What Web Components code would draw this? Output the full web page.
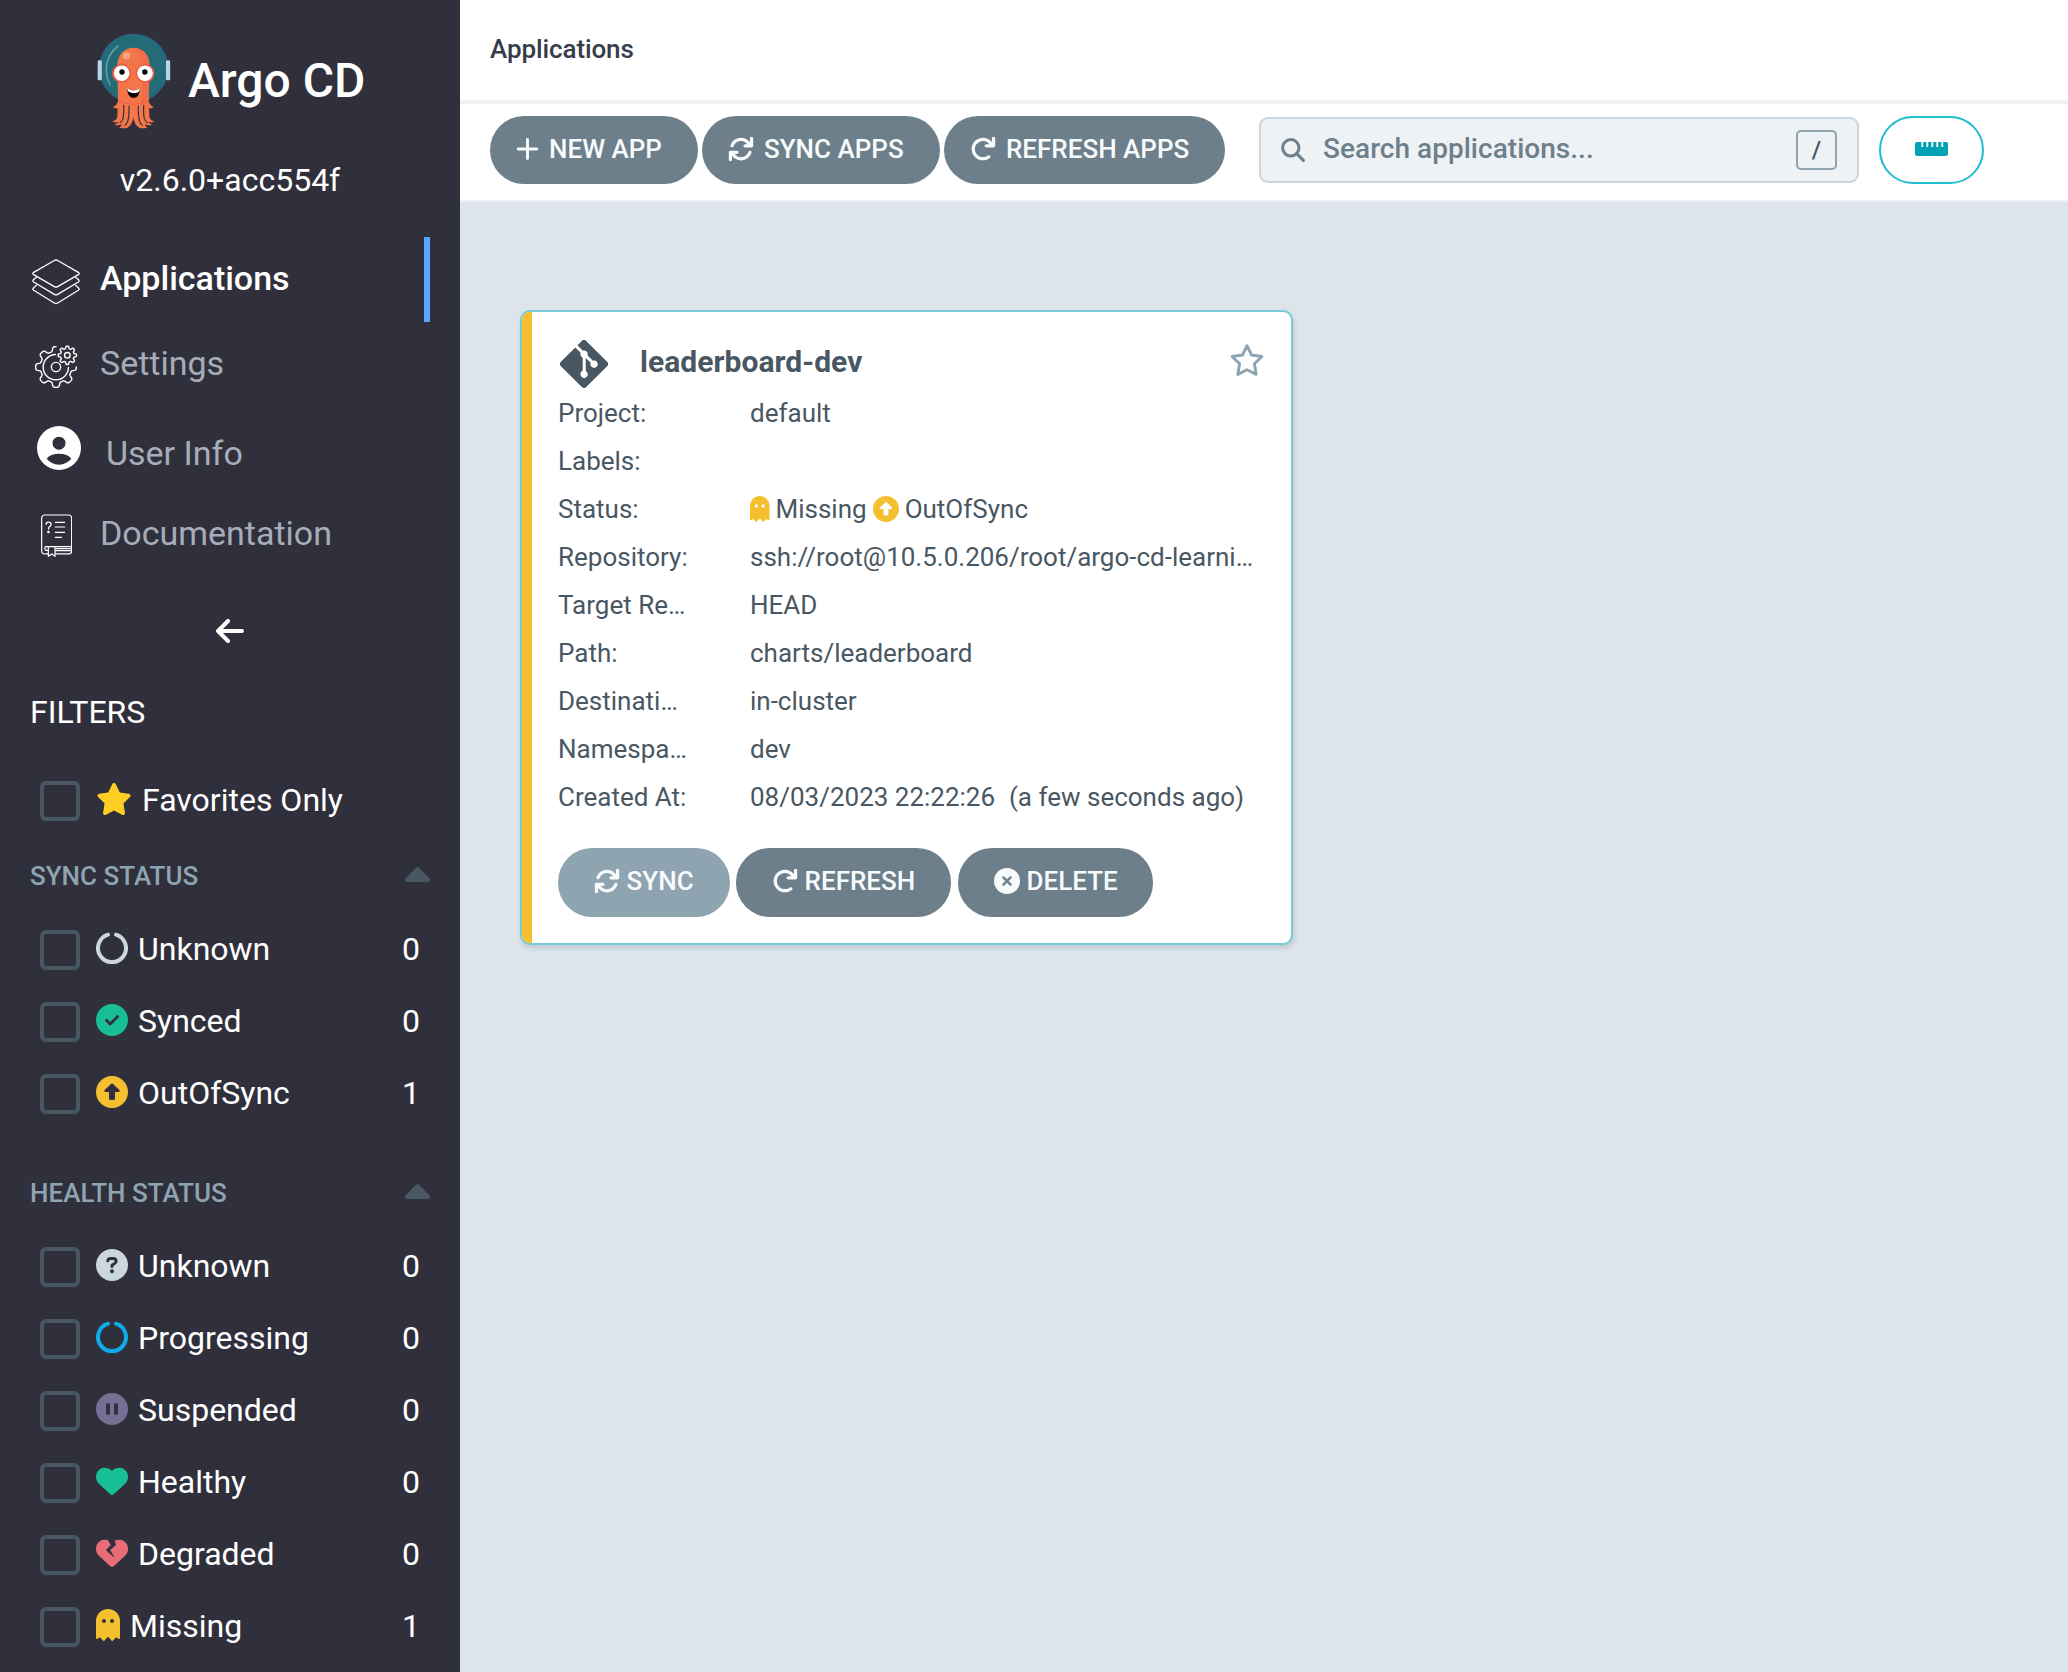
<!DOCTYPE html>
<html lang="en">
<head>
<meta charset="utf-8">
<title>Applications - Argo CD</title>
<style>
html,body{margin:0;height:100%}
body{font-family:Roboto,"Liberation Sans",sans-serif;background:#dde4eb;overflow:hidden}
</style>
</head>
<body>
<cd-app></cd-app>
<script>
const define=(name,css,html)=>{
  const tpl=document.createElement('template');
  customElements.define(name,class extends HTMLElement{
    connectedCallback(){
      if(this.shadowRoot)return;
      tpl.innerHTML=`<style>*{box-sizing:border-box}${css}</style>${typeof html==='function'?html(this):html}`;
      this.attachShadow({mode:'open'}).append(tpl.content.cloneNode(true));
    }
  });
};

// Closed or partial cog outline; angles in degrees, clockwise from the right.
function cog(cx,cy,root,tip,teeth,from,to){
  const mid=(root+tip)/2,amp=(tip-root)/2,pts=[];
  for(let a=from;a<=to;a+=1.5){
    const t=a*Math.PI/180,r=mid+amp*Math.tanh(2.4*Math.cos(teeth*t))/Math.tanh(2.4);
    pts.push((cx+r*Math.cos(t)).toFixed(1)+' '+(cy+r*Math.sin(t)).toFixed(1));
  }
  return 'M'+pts.join('L');
}

// name: [viewBox, width, height, markup]
const ICONS={
  plus:['0 0 23 26',23,26,'<path d="M11.5 3.4v19.2M2.2 13h18.6" stroke="currentColor" stroke-width="2.9" stroke-linecap="round"/>'],
  sync:['0 0 512 512',26,26,'<path fill="currentColor" d="M464 16c-17.67 0-32 14.31-32 32v74.09C392.1 66.52 327.4 32 256 32C161.5 32 78.59 92.34 49.58 182.2c-5.438 16.81 3.797 34.88 20.61 40.28c16.89 5.5 34.88-3.812 40.3-20.59C130.9 138.5 189.4 96 256 96c50.5 0 96.26 24.55 124.4 64H336c-17.67 0-32 14.31-32 32s14.33 32 32 32h128c17.67 0 32-14.31 32-32V48C496 30.31 481.7 16 464 16zM441.8 289.6c-16.92-5.438-34.88 3.812-40.3 20.59C381.1 373.5 322.6 416 256 416c-50.5 0-96.25-24.55-124.4-64H176c17.67 0 32-14.31 32-32s-14.33-32-32-32h-128c-17.67 0-32 14.31-32 32v144c0 17.69 14.33 32 32 32s32-14.31 32-32v-74.09C119.9 445.5 184.6 480 255.1 480c94.45 0 177.4-60.34 206.4-150.2C467.9 313 458.6 295 441.8 289.6z"/>'],
  refresh:['0 0 512 512',26,26,'<path fill="currentColor" d="M496 48V192c0 17.69-14.31 32-32 32H320c-17.69 0-32-14.31-32-32s14.31-32 32-32h63.39c-29.97-39.7-77.25-63.78-127.6-63.78C167.7 96.22 96 167.9 96 256s71.69 159.8 159.8 159.8c34.88 0 68.03-11.03 95.88-31.94c14.22-10.53 34.22-7.75 44.81 6.375c10.59 14.16 7.75 34.22-6.375 44.81c-39.03 29.28-85.36 44.86-134.2 44.86C132.5 479.9 32 379.4 32 256s100.5-223.9 223.9-223.9c69.15 0 134 32.47 176.1 86.12V48c0-17.69 14.31-32 32-32S496 30.31 496 48z"/>'],
  close:['0 0 26 26',26,26,'<circle cx="13" cy="13" r="13" fill="currentColor"/><path d="M9.4 9.4l7.2 7.2M16.6 9.4l-7.2 7.2" stroke="#6d7f8b" stroke-width="2.4" stroke-linecap="round"/>'],
  search:['0 0 24 24',24,24,'<circle cx="9.8" cy="9.8" r="8.2" fill="none" stroke="currentColor" stroke-width="3"/><path d="M16 16l6.4 6.4" stroke="currentColor" stroke-width="3" stroke-linecap="round"/>'],
  ruler:['0 0 33 14',33,14,'<path fill="currentColor" d="M2 0h4.4v5h1.8V0h3.2v5h1.8V0h3.2v5h1.8V0h3.2v5h1.8V0h3.2v5h1.8V0H31a2 2 0 0 1 2 2v9.5a2.5 2.5 0 0 1-2.5 2.5h-28A2.5 2.5 0 0 1 0 11.5V2a2 2 0 0 1 2-2z"/>'],
  git:['0 32 448 448',48,48,'<path fill="currentColor" d="M439.55 236.05L244 40.45a28.87 28.87 0 0 0-40.81 0l-40.66 40.63 51.52 51.52c27.06-9.14 52.68 16.77 43.39 43.68l49.66 49.66c34.23-11.8 61.18 31 35.47 56.69-26.49 26.49-70.21-2.87-56-37.34L240.22 199v121.85c25.3 12.54 22.26 41.85 9.08 55a34.34 34.34 0 0 1-48.55 0c-17.57-17.6-11.07-46.91 11.25-56v-123c-20.8-8.51-24.6-30.74-18.64-45L142.57 101 8.45 235.14a28.86 28.86 0 0 0 0 40.81l195.61 195.6a28.86 28.86 0 0 0 40.8 0l194.69-194.69a28.86 28.86 0 0 0 0-40.81z"/>'],
  star:['0 0 576 512',36,32,'<path fill="currentColor" d="M316.9 18C311.6 7 300.4 0 288.1 0s-23.4 7-28.8 18L195 150.3 51.4 171.5c-12 1.8-22 10.2-25.7 21.7s-.7 24.2 7.9 32.7L137.8 329 113.2 474.7c-2 12 3 24.2 12.9 31.3s23 8 33.8 2.3l128.3-68.5 128.3 68.5c10.8 5.7 23.9 4.9 33.8-2.3s14.9-19.3 12.9-31.3L438.5 329 542.7 225.9c8.6-8.5 11.7-21.2 7.9-32.7s-13.7-19.9-25.7-21.7L381.2 150.3 316.9 18z"/>'],
  starline:['0 0 36 32',36,32,'<path fill="none" stroke="currentColor" stroke-width="2.9" stroke-linejoin="round" d="M18 1.7L22.5 11l10.4 1.5-7.5 7.3 1.8 10.6L18 25.8l-9.2 4.6 1.8-10.6-7.5-7.3L13.5 11z"/>'],
  notch:['0 0 32 32',32,32,'<path d="M20 2.7A14 14 0 1 1 12 2.7" fill="none" stroke="currentColor" stroke-width="4" stroke-linecap="round"/>'],
  check:['0 0 32 32',32,32,'<circle cx="16" cy="16" r="16" fill="currentColor"/><path d="M10.5 16.3l3.7 3.7 7.4-7.4" fill="none" stroke="#30303c" stroke-width="2.8" stroke-linecap="round" stroke-linejoin="round"/>'],
  up:['0 0 32 32',32,32,'<path fill="currentColor" fill-rule="evenodd" d="M16 0a16 16 0 1 1 0 32 16 16 0 0 1 0-32zM14.9 7.9L8.9 13.7c-1.2 1.2-.5 2.3.6 2.3H13v6.5a1.5 1.5 0 0 0 1.500 1.500h3a1.500 1.500 0 0 0 1.500-1.500V16h3.500c1.100 0 1.800-1.100.6-2.300l-6-5.800a1.600 1.600 0 0 0-2.200 0z"/>'],
  question:['0 0 32 32',32,32,'<circle cx="16" cy="16" r="16" fill="currentColor"/><path d="M11.8 11.8c.3-1.4 1.3-2.2 2.7-2.2h2.6c1.7 0 3 1.1 3 2.7 0 1.2-.6 1.9-1.7 2.5L16 16.2v1.2" fill="none" stroke="#30303c" stroke-width="3" stroke-linecap="round" stroke-linejoin="round"/><circle cx="16" cy="22.2" r="2" fill="#30303c"/>'],
  pause:['0 0 32 32',32,32,'<circle cx="16" cy="16" r="16" fill="currentColor"/><path d="M12 12v8M20 12v8" stroke="#30303c" stroke-width="4" stroke-linecap="round"/>'],
  heart:['0 0 512 512',32,32,'<path fill="currentColor" d="M47.6 300.4L228.3 469.1c7.5 7 17.4 10.9 27.7 10.9s20.2-3.9 27.7-10.9L464.4 300.4c30.4-28.3 47.6-68 47.6-109.5v-5.8c0-69.9-50.5-129.5-119.4-141C347 36.5 300.6 51.4 268 84L256 96 244 84c-32.6-32.6-79-47.5-124.6-39.9C50.5 55.6 0 115.2 0 185.1v5.8c0 41.5 17.2 81.2 47.6 109.5z"/>'],
  broken:['0 0 512 512',32,32,'<path fill="currentColor" d="M119.4 44.1c23.3-3.9 46.8-1.9 68.6 5.3l49.8 77.5-75.4 75.4c-1.5 1.5-2.4 3.6-2.3 5.8s1 4.2 2.6 5.7l112 104c2.9 2.7 7.4 2.9 10.5 .3s3.8-7 1.7-10.4l-60.4-98.1 90.7-75.6c2.6-2.1 3.5-5.7 2.4-8.8L296.8 61.8c28.5-16.7 62.4-23.2 95.7-17.6C461.5 55.6 512 115.2 512 185.1v5.8c0 41.5-17.2 81.2-47.6 109.5L283.7 469.1c-7.5 7-17.4 10.9-27.7 10.9s-20.2-3.9-27.7-10.9L47.6 300.4C17.2 272.1 0 232.4 0 190.9v-5.8c0-69.9 50.5-129.5 119.4-141z"/>'],
  ghost:['0 0 24 32',24,32,'<path fill="currentColor" fill-rule="evenodd" d="M0 12a12 12 0 0 1 24 0v16.9c0 1-1 1.4-1.7.9l-1.3-1c-.6-.5-1.3-.4-1.7.2l-2.2 2.500c-.5.6-1.2.6-1.7 0l-2.400-2.900c-.5-.6-1.500-.6-2 0l-2.400 2.900c-.5.6-1.200.6-1.700 0l-2.200-2.500c-.4-.6-1.100-.7-1.700-.2l-1.300 1c-.7.5-1.700.1-1.700-.9zM8 10a2 2 0 1 0 0 4 2 2 0 0 0 0-4zM16 10a2 2 0 1 0 0 4 2 2 0 0 0 0-4z"/>'],
  caret:['0 0 25 15',25,15,'<path fill="currentColor" d="M10.9.8L.7 11.2C-.7 12.7.2 15 2.1 15h20.8c1.9 0 2.8-2.3 1.4-3.8L14.1.8a2.3 2.3 0 0 0-3.2 0z"/>'],
  back:['0 0 28 24',28,24,'<path fill="none" stroke="currentColor" stroke-width="4" stroke-linecap="round" stroke-linejoin="round" d="M12 2L2 12l10 10M2 12h24"/>'],
  layers:['0 0 144 138',48,46,'<g fill="none" stroke="currentColor" stroke-width="3.8" stroke-linejoin="round"><path d="M67 4.5q5-3 10 0L139 40q5 3.5 0 7L77 83q-5 3-10 0L5 47q-5-3.5 0-7z"/><path d="M14 54L5 61.5q-5 4 0 7.5L67 106q5 3 10 0l62-37q5-3.5 0-7.5L130 54"/><path d="M14 78L5 86q-5 4 0 7.5L67 132q5 3 10 0l62-38.5q5-3.5 0-7.5L130 78"/></g>'],
  cogs:['102 72 132 132',44,44,`<g fill="none" stroke="currentColor" stroke-width="4.2" stroke-linecap="round" stroke-linejoin="round"><path d="${cog(168,138,47,61,8,0,270)}"/><path d="${cog(202,103,20.5,27.5,8,0,360)}z"/><path d="M166 100.5A38 38 0 1 0 205.5 139"/><circle cx="168" cy="138" r="14"/><circle cx="202" cy="103" r="8.5"/></g>`],
  user:['0 0 132 132',44,44,'<path fill="currentColor" fill-rule="evenodd" d="M66 0a66 66 0 1 1 0 132A66 66 0 0 1 66 0zM66 32a19.5 19.5 0 1 0 0 39 19.5 19.5 0 0 0 0-39zM29 98q14 17 37 18 23-1 37-18-11-15-37-15T29 98z"/>'],
  book:['0 0 94 130',31.3,43.3,'<g fill="none" stroke="currentColor" stroke-width="3.6" stroke-linecap="round" stroke-linejoin="round"><path d="M20 120H11a8 8 0 0 1-9-8V12a9 9 0 0 1 9-9h72a9 9 0 0 1 9 9v100a8 8 0 0 1-8 8H44M90 98H14q-5 5.5 0 11h6M46 104h44M44 110h46M22 100v27l10-7 10 7v-27"/><path d="M43 25h28M43 39h28M43 55h28M43 70h19"/><path stroke-width="4" d="M15.5 31c0-4 3-6.5 7-6.5 4.5 0 8 3 8 7 0 5-8 6-8 12.5v1"/></g><circle cx="22.5" cy="54" r="4" fill="currentColor"/>']
};

define('cd-icon',`:host{display:block;flex:none}svg{display:block}`,el=>{
  const [vb,w,h,body]=ICONS[el.getAttribute('name')],k=+(el.getAttribute('scale')||1);
  return `<svg viewBox="${vb}" width="${w*k}" height="${h*k}">${body}</svg>`;
});

define('cd-logo',`:host{display:block;flex:none}svg{display:block}`,`
<svg viewBox="291 99 222 288" width="74" height="96">
  <circle cx="401" cy="205" r="102" fill="#226b77" stroke="#2f6285" stroke-width="4"/>
  <rect x="293" y="181" width="12.5" height="60" rx="4" fill="#b9d5ec"/><rect x="498" y="181" width="12.5" height="60" rx="4" fill="#b9d5ec"/>
  <path d="M354 138Q321 164 319 203 318 232 331 254" fill="none" stroke="#649da1" stroke-width="5" stroke-linecap="round"/>
  <path d="M352 200C352 162 373 143 400 143s49 19 49 57l-3 104q3 13 15 17-5 5-14 4l1 25q2 11 16 14-7 5-19 2 3 5 11 8-9 4-21-1 1 7 7 10-14 4-24 0-14-7-18-30-4 23-18 30-10 4-24 0 6-3 7-10-12 5-21 1 8-3 11-8-12 3-19-2 14-3 16-14l1-25q-9 1-14-4 12-4 15-17z" fill="#f37548"/>
  <path d="M400 143c28 0 50 19 49 57l-3 100q-8 6-20 8V200q-2-45-26-57z" fill="#ee6844" opacity=".6"/>
  <path d="M371 316q1 28-2 40-3 8-9 12M387 318q1 30-4 46-3 8-8 12M415 318q-1 30 4 46 3 8 8 12M431 316q-1 28 2 40 3 8 9 12" fill="none" stroke="#30303c" stroke-width="3.5" stroke-linecap="round"/>
  <path d="M356 303q44 20 90 0" fill="none" stroke="#eb6142" stroke-width="4"/>
  <circle cx="380" cy="167" r="11" fill="#f8a384"/>
  <circle cx="364" cy="220" r="28" fill="#e8573c"/><circle cx="436" cy="220" r="28" fill="#e8573c"/>
  <circle cx="365" cy="220" r="23.5" fill="#fff"/><circle cx="435" cy="220" r="23.5" fill="#fff"/>
  <circle cx="366" cy="216" r="8" fill="#000"/><circle cx="434.5" cy="216" r="8" fill="#000"/>
  <path d="M381 264q19 14 39 1-1 29-20 29-17-1-19-30z" fill="#000"/>
  <path d="M381 264q19 14 39 1-1 6-3 10-16 10-33-1z" fill="#fff"/>
</svg>`);

define('cd-nav-item',`
:host{display:flex;align-items:center;height:85px;padding-left:32px;font-size:34px;line-height:40px;color:#a6adb9}
:host([active]){color:#fff;font-weight:500;border-right:6px solid #5aa5ff;margin-right:30px}
.i{width:var(--slot,48px);display:flex;justify-content:center;color:#fff;margin-right:20px;padding-top:var(--drop,4px)}
.t{padding-bottom:var(--lift,4px)}`,
  el=>`<div class="i"><cd-icon name="${el.getAttribute('icon')}"></cd-icon></div><div class="t"><slot></slot></div>`);

define('cd-filter',`
:host{display:flex;align-items:center;height:40px;padding:0 40px;font-size:32px;line-height:38px;color:#fff}
.b{width:40px;height:40px;border:4px solid #495763;border-radius:6px;flex:none;margin-right:16px}
cd-icon{margin:0 10px 4px 0}.t{flex:1;padding-bottom:2px;white-space:nowrap}.n{padding-bottom:2px}`,
  el=>`<div class="b"></div><cd-icon name="${el.getAttribute('icon')}" style="color:${el.getAttribute('tint')}"></cd-icon><div class="t"><slot></slot></div><div class="n">${el.getAttribute('count')||''}</div>`);

define('cd-filter-group',`
:host{display:block}
header{display:flex;justify-content:space-between;align-items:center;height:30px;padding:0 30px;font-size:26px;font-weight:500;line-height:30px;color:#8fa4b1;margin-bottom:39px}
cd-icon{color:#495763;margin-bottom:3px}.r{display:flex;flex-direction:column;gap:32px}`,
  el=>`<header><span>${el.getAttribute('heading')}</span><cd-icon name="caret"></cd-icon></header><div class="r"><slot></slot></div>`);

define('cd-sidebar',`
:host{display:block;width:460px;height:100%;background:#30303c;color:#fff;flex:none;overflow:hidden}
.brand{display:flex;align-items:center;gap:17px;padding:33px 0 0 97px;font-size:48px;font-weight:500;line-height:96px}
.ver{font-size:32px;line-height:40px;text-align:center;margin:31px 0 37px}
.back{height:122px;display:flex;align-items:center;justify-content:center}
h2{font-size:32px;font-weight:400;line-height:40px;margin:0 0 49px 30px}
.user{height:90px;--slot:54px;--drop:0px;--lift:0px;margin:-4px 0 4px}
.user cd-icon{margin-left:-2px}.user span{display:block;padding-top:9px}
cd-filter-group{margin-top:40px}cd-filter-group+cd-filter-group{margin-top:64px}`,`
<div class="brand"><cd-logo></cd-logo><span>Argo CD</span></div>
<div class="ver">v2.6.0+acc554f</div>
<nav>
<cd-nav-item icon="layers" active>Applications</cd-nav-item>
<cd-nav-item icon="cogs">Settings</cd-nav-item>
<cd-nav-item icon="user" class="user"><span>User Info</span></cd-nav-item>
<cd-nav-item icon="book" style="height:73px;--slot:49px;margin-right:-1px;--lift:2px"><span style="margin-left:-1px">Documentation</span></cd-nav-item>
</nav>
<div class="back"><cd-icon name="back"></cd-icon></div>
<h2>FILTERS</h2>
<cd-filter icon="star" tint="#ffce25">Favorites Only</cd-filter>
<cd-filter-group heading="SYNC STATUS">
<cd-filter icon="notch" tint="#ccd6dd" count="0">Unknown</cd-filter>
<cd-filter icon="check" tint="#18be94" count="0">Synced</cd-filter>
<cd-filter icon="up" tint="#f4c030" count="1">OutOfSync</cd-filter>
</cd-filter-group>
<cd-filter-group heading="HEALTH STATUS">
<cd-filter icon="question" tint="#ccd6dd" count="0">Unknown</cd-filter>
<cd-filter icon="notch" tint="#0dadea" count="0">Progressing</cd-filter>
<cd-filter icon="pause" tint="#766f94" count="0">Suspended</cd-filter>
<cd-filter icon="heart" tint="#18be94" count="0">Healthy</cd-filter>
<cd-filter icon="broken" tint="#e96d76" count="0">Degraded</cd-filter>
<cd-filter icon="ghost" tint="#f4c030" count="1">Missing</cd-filter>
</cd-filter-group>`);

define('cd-button',`
:host{display:flex;align-items:center;height:68px;border-radius:34px;background:#6d7f8b;color:#f8fbfc;font-size:26px;font-weight:500;line-height:30px;white-space:nowrap;padding:0 0 3px 26px;gap:10px;box-sizing:border-box;flex:none}
:host([card]){height:69px;padding:0 0 4px 36px;gap:6.6px}
:host([disabled]){background:#8fa4b1}`,
  el=>`<cd-icon name="${el.getAttribute('icon')}"></cd-icon><span><slot></slot></span>`);

define('cd-search',`
:host{display:flex;align-items:center;width:600px;height:66px;border:2px solid #cad5de;border-radius:9px;background:#eef2f5;color:#6d7f8b;font-size:28px;font-weight:500;line-height:34px;padding:0 20px;box-sizing:border-box;flex:none}
.t{flex:1;margin-left:18px;padding-bottom:3px;letter-spacing:.03px}
.k{width:41px;height:40px;border:2px solid #8fa4b1;border-radius:5px;color:#495763;font-size:24px;line-height:36px;text-align:center}`,
`<cd-icon name="search"></cd-icon><div class="t"><slot></slot></div><div class="k">/</div>`);

define('cd-top',`
:host{display:block;background:#fff}
header{height:104px;border-bottom:4px solid #eef2f5;padding:33px 30px 0;font-size:26px;font-weight:500;line-height:32px;color:#363c4a;letter-spacing:-.1px}
.bar{height:98px;border-bottom:2px solid #eef2f5;display:flex;align-items:center;padding:0 30px 4px;gap:4px}
cd-search{margin:0 16px 0 30px}
.ruler{width:105px;height:68px;border:2px solid #1fbdd0;border-radius:34px;display:flex;align-items:center;justify-content:center;color:#00a2b3;padding-bottom:3px}`,`
<header>Applications</header>
<div class="bar">
<cd-button icon="plus" style="width:208px">NEW APP</cd-button>
<cd-button icon="sync" style="width:238px">SYNC APPS</cd-button>
<cd-button icon="refresh" style="width:281px">REFRESH APPS</cd-button>
<cd-search>Search applications...</cd-search>
<div class="ruler"><cd-icon name="ruler"></cd-icon></div>
</div>`);

define('cd-field',`
:host{display:flex;height:48px;line-height:48px;font-size:26px;white-space:pre}
.k{width:192px;flex:none}.v{display:flex;align-items:center}`,
  el=>`<div class="k">${el.getAttribute('label')}</div><div class="v"><slot></slot></div>`);

define('cd-card',`
:host{display:block;width:773px;height:635px;background:#fff;border:2px solid #78cbd5;border-radius:10px;box-shadow:1px 3px 5px rgba(100,120,130,.25);color:#495763;overflow:hidden}
.in{height:100%;border-left:10px solid #f4c030;padding:28px 26px 0}
.head{display:flex;align-items:flex-start;padding-left:2px}
h3{flex:1;margin:4px 0 0 32px;font-size:30px;font-weight:700;line-height:36px;letter-spacing:.05px}
.head cd-icon[name=starline]{color:#8fa4b1;margin:4px 0 0}
.fields{margin-top:1px}.y{color:#f4c030;margin-right:6px;margin-bottom:1px}.gap{margin-left:6px}
.act{display:flex;margin-top:27px}`,`
<div class="in">
<div class="head"><cd-icon name="git"></cd-icon><h3>leaderboard-dev</h3><cd-icon name="starline"></cd-icon></div>
<div class="fields">
<cd-field label="Project:">default</cd-field>
<cd-field label="Labels:"></cd-field>
<cd-field label="Status:"><cd-icon class="y" name="ghost" scale=".8125"></cd-icon>Missing<cd-icon class="y gap" name="up" scale=".8125"></cd-icon>OutOfSync</cd-field>
<cd-field label="Repository:">ssh://root@10.5.0.206/root/argo-cd-learni…</cd-field>
<cd-field label="Target Re…">HEAD</cd-field>
<cd-field label="Path:">charts/leaderboard</cd-field>
<cd-field label="Destinati…">in-cluster</cd-field>
<cd-field label="Namespa…">dev</cd-field>
<cd-field label="Created At:">08/03/2023 22:22:26&nbsp; <span style="margin-left:1px">(a few seconds ago)</span></cd-field>
</div>
<div class="act">
<cd-button card disabled icon="sync" style="width:172px;margin-right:6px">SYNC</cd-button>
<cd-button card icon="refresh" style="width:215px;margin-right:7px">REFRESH</cd-button>
<cd-button card icon="close" style="width:195px">DELETE</cd-button>
</div>
</div>`);

define('cd-app',`
:host{display:flex;height:1672px}
main{flex:1;min-width:0}
.tiles{padding:108px 60px}`,`
<cd-sidebar></cd-sidebar>
<main><cd-top></cd-top><div class="tiles"><cd-card></cd-card></div></main>`);
</script>
</body>
</html>
